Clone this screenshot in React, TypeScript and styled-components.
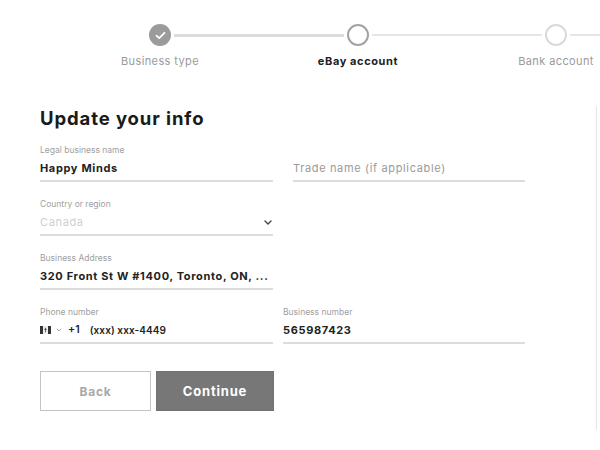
import React from "react";
import styled, { createGlobalStyle } from "styled-components";

const Global = createGlobalStyle`
  html, body { margin: 0; padding: 0; background: #ffffff; }
  body { font-family: Inter, "Open Sans", Arial, sans-serif; color: #222; }
  * { box-sizing: border-box; }
`;

const Page = styled.div`
  width: 600px;
  height: 450px;
  overflow: hidden;
  background: #fff;
`;

const Stepper = styled.div`
  display: flex;
  padding: 24px 0 0 61px;
  width: 800px;
`;

const Step = styled.div`
  width: 198px;
  flex: none;
  display: flex;
  flex-direction: column;
  align-items: center;
`;

const Track = styled.div`
  width: 100%;
  height: 22px;
  display: flex;
  align-items: center;
  gap: 3px;
`;

const Line = styled.div<{ $tone: "done" | "todo" | "none" }>`
  flex: 1;
  height: ${(p) => (p.$tone === "done" ? "3px" : "2px")};
  background: ${(p) =>
    p.$tone === "done" ? "#dcdcdc" : p.$tone === "todo" ? "#e6e6e6" : "transparent"};
`;

const Circle = styled.div<{ $state: "done" | "current" | "todo" }>`
  width: 22px;
  height: 22px;
  flex: none;
  border-radius: 50%;
  display: flex;
  align-items: center;
  justify-content: center;
  background: ${(p) => (p.$state === "done" ? "#9b9b9b" : "#fff")};
  border: ${(p) =>
    p.$state === "done"
      ? "none"
      : p.$state === "current"
      ? "2px solid #a3a3a3"
      : "2px solid #dadada"};
`;

const StepLabel = styled.div<{ $active?: boolean }>`
  margin-top: 8px;
  font-size: 11px;
  line-height: 14px;
  white-space: nowrap;
  letter-spacing: ${(p) => (p.$active ? "0.6px" : "0.4px")};
  font-weight: ${(p) => (p.$active ? 700 : 400)};
  color: ${(p) => (p.$active ? "#222" : "#9a9a9a")};
`;

const Content = styled.div`
  margin-top: 38px;
  display: flex;
`;

const FormCol = styled.div`
  width: 596px;
  padding: 0 0 19px 40px;
  flex: none;
`;

const SidePanel = styled.div`
  flex: 1;
  border-left: 1.5px solid #e6e6e6;
`;

const Title = styled.h1`
  margin: 0 0 14px;
  font-size: 18.5px;
  line-height: 24px;
  font-weight: 700;
  color: #1a1a1a;
  letter-spacing: 0.9px;
`;

const Row = styled.div<{ $gap: number }>`
  display: flex;
  width: 485px;
  gap: ${(p) => p.$gap}px;
  margin-bottom: 16px;
`;

const Field = styled.div<{ $fixed?: boolean }>`
  width: ${(p) => (p.$fixed ? "233px" : "auto")};
  flex: ${(p) => (p.$fixed ? "none" : "1")};
  display: flex;
  flex-direction: column;
  justify-content: flex-end;
  padding-bottom: 4px;
  border-bottom: 2px solid #dcdcdc;
`;

const Label = styled.div`
  font-size: 8.5px;
  line-height: 12px;
  color: #a0a0a0;
  margin-bottom: 4px;
  white-space: nowrap;
`;

const Value = styled.div<{ $muted?: "placeholder" | "faint" }>`
  font-size: 11px;
  line-height: 16px;
  white-space: nowrap;
  letter-spacing: 0.65px;
  font-weight: ${(p) => (p.$muted ? 400 : 700)};
  color: ${(p) =>
    p.$muted === "placeholder" ? "#9a9a9a" : p.$muted === "faint" ? "#cfcfcf" : "#222"};
  display: flex;
  align-items: center;
`;

const SelectValue = styled(Value)`
  justify-content: space-between;
  padding-right: 1px;
`;

const Phone = styled.div`
  display: flex;
  align-items: center;
  font-size: 10px;
  line-height: 16px;
  letter-spacing: 0.1px;
  color: #222;
`;

const Flag = styled.svg`
  width: 11px;
  height: 8px;
  margin-right: 5px;
`;

const Caret = styled.svg`
  width: 6px;
  height: 4px;
  margin-right: 6px;
`;

const Code = styled.span`
  margin-right: 10px;
  font-weight: 600;
  font-size: 10.5px;
`;

const Masked = styled.span`
  font-weight: 600;
`;

const Buttons = styled.div`
  display: flex;
  gap: 5px;
  margin-top: 27px;
`;

const Button = styled.button<{ $primary?: boolean }>`
  height: 40px;
  width: ${(p) => (p.$primary ? "118px" : "111px")};
  font-family: inherit;
  font-size: ${(p) => (p.$primary ? "13px" : "12px")};
  font-weight: 700;
  letter-spacing: 0.8px;
  border: ${(p) => (p.$primary ? "1.5px solid #727272" : "1.5px solid #c4c4c4")};
  background: ${(p) => (p.$primary ? "#777777" : "#ffffff")};
  color: ${(p) => (p.$primary ? "#ffffff" : "#a8a8a8")};
  cursor: pointer;
  padding: 0;
`;

const steps = [
  { label: "Business type", state: "done" as const },
  { label: "eBay account", state: "current" as const },
  { label: "Bank account", state: "todo" as const },
];

export default function App() {
  return (
    <Page>
      <Global />
      <Stepper>
        {steps.map((s, i) => (
          <Step key={s.label}>
            <Track>
              <Line $tone={i === 0 ? "none" : i === 1 ? "done" : "todo"} />
              <Circle $state={s.state}>
                {s.state === "done" && (
                  <svg width="11" height="9" viewBox="0 0 11 9">
                    <path
                      d="M1.5 4.6 L4.2 7.2 L9.5 1.8"
                      fill="none"
                      stroke="#fff"
                      strokeWidth="1.8"
                      strokeLinecap="round"
                      strokeLinejoin="round"
                    />
                  </svg>
                )}
              </Circle>
              <Line $tone={i === 0 ? "done" : "todo"} />
            </Track>
            <StepLabel $active={s.state === "current"}>{s.label}</StepLabel>
          </Step>
        ))}
      </Stepper>

      <Content>
        <FormCol>
          <Title>Update your info</Title>

          <Row $gap={20}>
            <Field $fixed>
              <Label>Legal business name</Label>
              <Value>Happy Minds</Value>
            </Field>
            <Field>
              <Value $muted="placeholder">Trade name (if applicable)</Value>
            </Field>
          </Row>

          <Row $gap={20}>
            <Field $fixed>
              <Label>Country or region</Label>
              <SelectValue $muted="faint">
                <span>Canada</span>
                <svg width="8" height="5" viewBox="0 0 8 5">
                  <path
                    d="M1 1 L4 4 L7 1"
                    fill="none"
                    stroke="#444"
                    strokeWidth="1.4"
                    strokeLinecap="round"
                    strokeLinejoin="round"
                  />
                </svg>
              </SelectValue>
            </Field>
          </Row>

          <Row $gap={20}>
            <Field $fixed>
              <Label>Business Address</Label>
              <Value>320 Front St W #1400, Toronto, ON, ...</Value>
            </Field>
          </Row>

          <Row $gap={10}>
            <Field $fixed>
              <Label>Phone number</Label>
              <Phone>
                <Flag viewBox="0 0 11 8">
                  <rect x="0" y="0" width="3" height="8" fill="#333" />
                  <rect x="8" y="0" width="3" height="8" fill="#333" />
                  <rect x="3" y="0" width="5" height="8" fill="#eee" />
                  <path d="M5.5 1.5 L6.8 4 L5.9 4 L5.9 6.2 L5.1 6.2 L5.1 4 L4.2 4 Z" fill="#444" />
                </Flag>
                <Caret viewBox="0 0 6 4">
                  <path d="M0.8 0.8 L3 3 L5.2 0.8" fill="none" stroke="#aaa" strokeWidth="1" />
                </Caret>
                <Code>+1</Code>
                <Masked>(xxx) xxx-4449</Masked>
              </Phone>
            </Field>
            <Field>
              <Label>Business number</Label>
              <Value>565987423</Value>
            </Field>
          </Row>

          <Buttons>
            <Button>Back</Button>
            <Button $primary>Continue</Button>
          </Buttons>
        </FormCol>
        <SidePanel />
      </Content>
    </Page>
  );
}
